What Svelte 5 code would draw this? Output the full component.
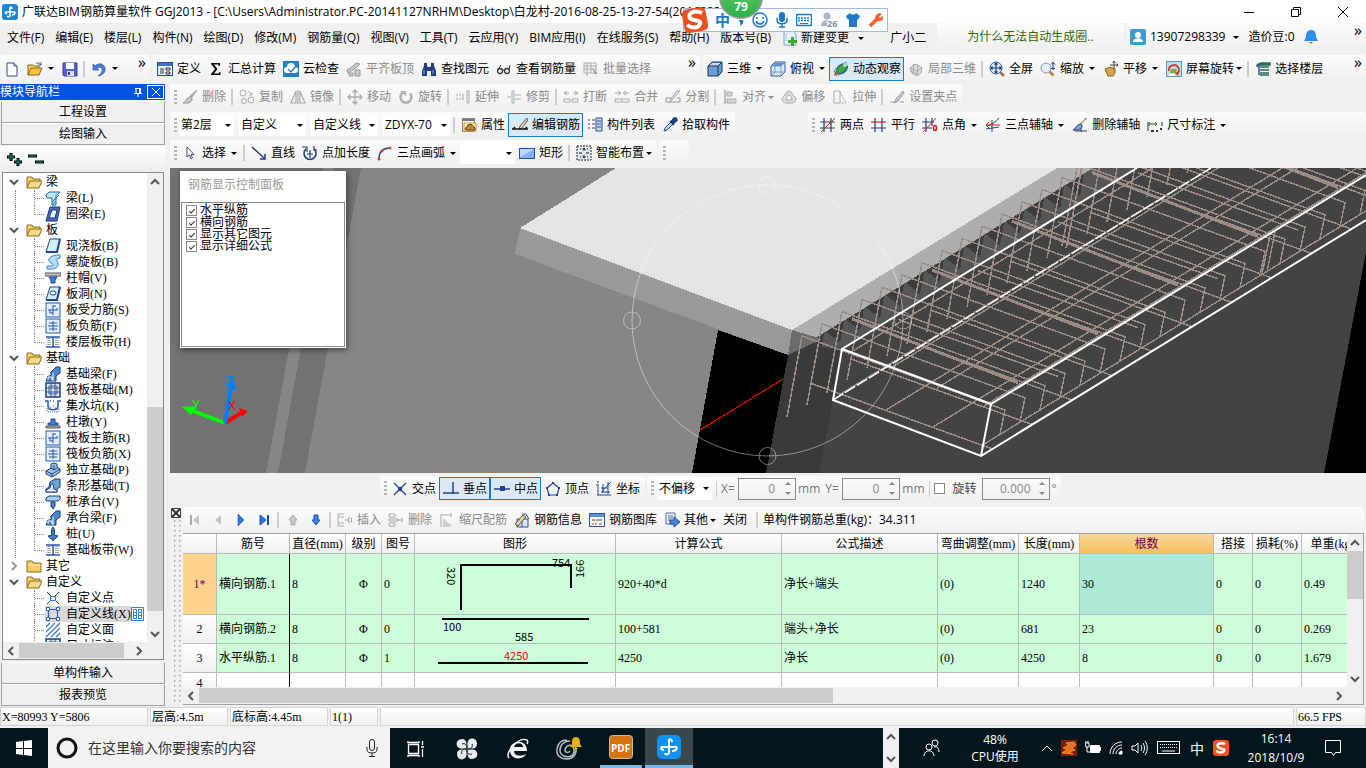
<script lang="ts">
	type Tool = {
		icon?: string;
		label?: string;
		off?: boolean;
		on?: boolean;
		drop?: 'tight' | 'wide';
		sep?: boolean;
	};

	const sep: Tool = { sep: true };

	const icons: Record<string, string> = {
		app: '<rect width="16" height="16" rx="3" fill="#1d86d8"/><path d="M8 3v9a2 2 0 0 1-3 0M3 8h10M13 8a3 3 0 0 1-3 3M3 8a3 3 0 0 0 2 2M8 3a2 2 0 0 1 2 2" fill="none" stroke="#fff" stroke-width="1.5"/>',
		file: '<path d="M3 2h7l3 3v10H3z" fill="#fff" stroke="#31507e"/><path d="M10 2v3h3" fill="#c9d8ef" stroke="#31507e"/>',
		open: '<path d="M1 14V4h5l1 1h5v3" fill="#f6d56b" stroke="#8a6414"/><path d="M1 14l3-7h11l-3 7z" fill="#f9c23c" stroke="#8a6414"/><path d="M9 3c2-2 4-1 5 1M14 1v3h-3" fill="none" stroke="#4d5a68"/>',
		save: '<path d="M1 2h14v13H2l-1-1z" fill="#5560c8" stroke="#3b3f96"/><path d="M4 2h8v6H4z" fill="#fff"/><path d="M5 10h7v5H5z" fill="#d8dcec"/><path d="M6 11h2v3H6z" fill="#343a8a"/>',
		undo: '<path d="M2 3v6h6L6 7c3-2 6 0 5 3-.3 2-2 3-4 5 5-1 8-4 7-8C13 3 8 1 4 5z" fill="#4b7dd8" stroke="#2553a8" stroke-width=".7"/>',
		define: '<rect x=".5" y="1.5" width="15" height="13" fill="#eef3fb" stroke="#1e4e9c"/><path d="M1 2h14v3H1z" fill="#3a74c8"/><path d="M3 8h4M3 10h4M3 12h4" stroke="#333"/><path d="M9 7h4v2H9zM9 11h4v2H9z" fill="none" stroke="#333"/>',
		sum: '<path d="M3 2h9v3h-1l-1-1.500H6L9.500 8 6 12.500h4.500l1-1.500h1V14H3v-1l4-5-4-5z" fill="#111"/>',
		cloud: '<rect width="16" height="16" fill="#1d83c6"/><path d="M4 12a3 3 0 0 1 0-6 4 4 0 0 1 8 0 3 3 0 0 1 0 6z" fill="#fff"/><path d="M5 8l3 3 5-6" fill="none" stroke="#1d83c6" stroke-width="1.500"/>',
		flat: '<path d="M1 9l6-4 3-3 4 1-4 4-8 5zM3 12h4v3H3zM9 9h5v6H9z" fill="#c8c8c8" stroke="#999"/>',
		find: '<path d="M3 2h3v3l1 1h2l1-1V2h3v3l2 5v5h-5v-5H6v5H1v-5l2-5z" fill="#1f3f7c"/><path d="M3 9v4M12 9v4" stroke="#8fb0e4"/>',
		glasses: '<circle cx="4" cy="10" r="2.500" fill="none" stroke="#333" stroke-width="1.300"/><circle cx="11" cy="10" r="2.500" fill="none" stroke="#333" stroke-width="1.300"/><path d="M6 9h3M2 9l3-5M13 9l1-5" stroke="#333" fill="none"/>',
		batch: '<path d="M1 2h12v10H1zM1 5h12M1 8h12M4 2v13M8 2v10" fill="none" stroke="#aaa"/><path d="M9 7l6 6-3 0 1 3z" fill="#999"/>',
		cube: '<path d="M1 5l4-4h10v10l-4 4H1z" fill="#6d9dd2" stroke="#1b3557"/><path d="M2 5l3-3h9l-3 3z" fill="#c3dbf3"/><path d="M1 5h10v10M11 5l4-4" fill="none" stroke="#1b3557"/>',
		cubeTop: '<path d="M1 5l4-4h10v10l-4 4H1z" fill="#d8e9fa" stroke="#2d5c92"/><path d="M2 5l3-3h9l-3 3z" fill="#5f97d4"/><path d="M1 5h10v10M11 5l4-4M5 1v10H1M5 11h10M1 15l4-4" fill="none" stroke="#5f8dc0" stroke-width=".8"/>',
		orbit: '<path d="M1 15l1-5 3 3z" fill="#cf3d22"/><ellipse cx="9" cy="8" rx="6" ry="4" fill="#3ca552" stroke="#1b6430" transform="rotate(-35 9 8)"/><path d="M1 11c1-4 8-10 13-9M3 14c4 1 10-4 11-9" fill="none" stroke="#2a5aa0" stroke-width=".8"/><circle cx="12" cy="4" r="2" fill="#a9e0b2"/>',
		part: '<path d="M2 7l4-4 4 1 4 3-1 5-4 3-5-3z" fill="#ddd" stroke="#aaa"/><path d="M6 3l-1 9M10 4l-1 11M2 7l7 3 5-3M2 10l7 3" stroke="#aaa" fill="none"/>',
		full: '<circle cx="7" cy="7" r="6" fill="#d9e8fb" stroke="#345a8c"/><path d="M7 2v10M2 7h10M5.500 3.500L7 2l1.500 1.500M5.500 10.500L7 12l1.500-1.500M3.500 5.500L2 7l1.500 1.500M10.500 5.500L12 7l-1.500 1.500" stroke="#1d3d82" stroke-width="1.200" fill="none"/><path d="M11 11l4 4" stroke="#a8703c" stroke-width="2.500"/>',
		zoom: '<circle cx="6" cy="7" r="5" fill="#e4effb" stroke="#8292a8"/><path d="M9.500 10.500l4 4" stroke="#c08032" stroke-width="2.500"/><path d="M13 2v7M11 3.500L13 1l2 2.500M11 7.500h4" stroke="#24436e" fill="none"/>',
		pan: '<path d="M2 8l5-2 5 2v4l-2 3H5z" fill="#d9a54c" stroke="#8c6120"/><path d="M11 0v8M7 4h8M9.500 1.500L11 0l1.500 1.500M13.500 2.500L15 4l-1.500 1.500" stroke="#444" fill="none"/>',
		rotate3: '<rect x=".5" y=".5" width="15" height="15" fill="#bfe0f2" stroke="#4f9ac0"/><path d="M5 8h6l-1 4H4z" fill="#7cb14a"/><path d="M3 10a5 5 0 1 1 8 3" fill="none" stroke="#d63c2c" stroke-width="1.800"/><path d="M13 10l-1 5-3-3z" fill="#d63c2c"/><path d="M3 13h5v2H3z" fill="#fff"/>',
		floors: '<path d="M2 4l4-2h9v2zM5 6h9M5 9h9M5 12h9M5 14h9" fill="#3d8b45" stroke="#28665a" stroke-width="1.500"/><path d="M1 5l3 0v9" stroke="#2a5c96" fill="none" stroke-width="1.500"/>',
		brush: '<path d="M15 1l-5 7-2-1z" fill="#bbb" stroke="#999"/><path d="M8 8c3 0 3 4-1 6H1c3-1 3-6 7-6z" fill="#c4c4c4" stroke="#9c9c9c"/>',
		copy: '<circle cx="4" cy="4" r="3" fill="none" stroke="#aaa"/><circle cx="5" cy="12" r="2.500" fill="none" stroke="#aaa"/><circle cx="12" cy="11" r="3" fill="none" stroke="#aaa"/><path d="M9 2l4 4M13 3v3h-3" stroke="#aaa" fill="none"/>',
		mirror: '<path d="M6 2v12H1zM10 2v12h5z" fill="none" stroke="#aaa" stroke-width="1.200"/><path d="M8 1v14" stroke="#999"/>',
		move: '<path d="M8 1v14M1 8h14M5.500 3.500L8 1l2.500 2.500M5.500 12.500L8 15l2.500-2.500M3.500 5.500L1 8l2.500 2.500M12.500 5.500L15 8l-2.500 2.500" fill="none" stroke="#aaa" stroke-width="1.300"/>',
		rotate: '<path d="M5 3.500a5.500 5.500 0 1 0 7 1" fill="none" stroke="#b0b0b0" stroke-width="2.500"/><path d="M2 2h6v5z" fill="#b0b0b0"/>',
		extend: '<path d="M1 6h7M1 10h7" stroke="#aaa" stroke-dasharray="2 1"/><path d="M8 5v6M12 2h2v12h-2z" fill="none" stroke="#aaa"/>',
		trim: '<path d="M6 2h2v12H6zM1 8h4M9 6h6M9 10h6" fill="none" stroke="#aaa"/>',
		breakIt: '<path d="M1 4h5M10 4h5M4 2L1 4l3 2M12 2l3 2-3 2M1 10h6v3H1zM9 10h6v3H9z" fill="none" stroke="#aaa"/>',
		merge: '<path d="M1 4h5M10 4h5M4 2l3 2-3 2M12 2L9 4l3 2M1 10h14v3H1zM8 10v3" fill="none" stroke="#aaa"/>',
		split: '<path d="M1 13h14M1 9h5M1 9v4M12 9h3v4M4 14L15 2l-3 0-7 9" fill="none" stroke="#999"/>',
		align: '<path d="M3 1v14" stroke="#aaa" stroke-width="1.500"/><path d="M5 3h5v4H5zM5 10h9v4H5z" fill="#d4d4d4" stroke="#aaa"/>',
		offset: '<path d="M8 2c3 0 3 3 4 4s3 2 3 4-2 4-4 4H5c-2 0-4-2-4-4s2-3 3-4 1-4 4-4z" fill="#ddd" stroke="#aaa"/><path d="M8 6c2 0 3 5 3 5H5s1-5 3-5z" fill="#fff" stroke="#aaa"/>',
		stretch: '<path d="M2 2h6v12H2z" fill="none" stroke="#aaa"/><path d="M8 3l6 11H8" fill="none" stroke="#aaa" stroke-dasharray="2 1"/>',
		grip: '<path d="M1 13h4M11 13h4" stroke="#999"/><path d="M14 2L7 10l-2 4 4-2 6-8z" fill="#ccc" stroke="#999"/>',
		props: '<rect x="1.500" y="1.500" width="12" height="13" fill="#fff" stroke="#888"/><path d="M1 2h13v2H1z" fill="#7a7a7a"/><path d="M3 6h12v8H3z" fill="#fff1c2" stroke="#e2901c"/><path d="M4 12l3-4 3-1 4 4v2H6z" fill="#b98b3c" stroke="#5a4415"/>',
		editBar: '<path d="M15 1l-7 8-1 3 3-1 6-8z" fill="#e8d5a8" stroke="#444" stroke-width=".8"/><path d="M0 12h16M1 12l2-2M13 12l2-2" stroke="#111" stroke-width="1.500"/>',
		list: '<path d="M1 3h2M1 7h2M1 11h2M5 3h3M5 7h3M5 11h3" stroke="#345"/><path d="M9 1h6v13H9z" fill="#c9daf2" stroke="#2d508c"/><path d="M10 4h4M10 7h4M10 10h4" stroke="#2d508c"/>',
		picker: '<path d="M2 14l1-3 6-6 2 2-6 6z" fill="#bcdcf4" stroke="#27456f"/><path d="M8 4l4 4M9 5l3-4h2l1 2-4 4z" fill="#1c4c98" stroke="#17386f" stroke-width="1.500"/>',
		twoPt: '<path d="M4 1v14M11 1v14M0 5h15M0 11h15" stroke="#2a3e74" stroke-width="1.200"/><path d="M1 15L15 1" stroke="#c22"/><circle cx="4" cy="11" r="1.500" fill="#2b8a2b"/><circle cx="11" cy="5" r="1.500" fill="#2b8a2b"/>',
		parallel: '<path d="M4 1v14M11 1v14M0 11h15" stroke="#2a3e74" stroke-width="1.200"/><path d="M0 5h15" stroke="#c22" stroke-width="1.200"/>',
		angle: '<path d="M4 1v14M0 5h12M0 11h10M10 1v8" stroke="#2a3e74" stroke-width="1.200"/><path d="M1 15L14 1" stroke="#c22"/><ellipse cx="13" cy="11" rx="1.500" ry="2.500" fill="none" stroke="#c22" stroke-width="1.500"/>',
		threeAxis: '<path d="M2 9c4-1 9-4 12-8M7 3v12M1 12l13-2" stroke="#2a3e74" fill="none"/><path d="M1 8h14M4 5L1 8l3 3" stroke="#c22" fill="none"/>',
		delAxis: '<path d="M14 1L8 8M3 14h12M9 9v6" stroke="#2a3e74"/><path d="M8 7c3 0 3 4-1 6H1c3-1 3-5 7-6z" fill="#7aa2d4" stroke="#2a3e74"/><path d="M15 1l-5 6-2-1z" fill="#e0b060"/>',
		dim: '<path d="M1 5v9M15 5v4M1 7h9" stroke="#333"/><path d="M3 5L1 7l2 2M8 5l2 2-2 2" fill="none" stroke="#2b8a2b"/><path d="M4 14h3M9 14h2M13 12h2" stroke="#333" stroke-width="2"/>',
		pointer: '<path d="M5 2v10l2.500-2L9 14l1.500-1L9 9.500h3z" fill="#fff" stroke="#3c4f78"/>',
		line: '<path d="M1 2l12 11" stroke="#1f3b78" stroke-width="1.500"/><path d="M14 9v5H9" fill="none" stroke="#1f3b78" stroke-width="1.500"/>',
		ptLen: '<path d="M4 4a6 6 0 1 0 8 0" fill="none" stroke="#1f3b78" stroke-width="1.500"/><path d="M0 2h5v5M8 5v8M5 9h6M12 1v4h3" fill="none" stroke="#1f3b78" stroke-width="1.200"/>',
		arc: '<path d="M2 14C2 7 6 3 13 3" fill="none" stroke="#24508f" stroke-width="1.500"/><circle cx="2" cy="14" r="1.600" fill="#d14c32"/><circle cx="5" cy="6" r="1.600" fill="#d14c32"/><circle cx="13" cy="3" r="1.600" fill="#d14c32"/>',
		rect: '<rect x=".5" y="3.500" width="15" height="10" fill="#8ab1f2" stroke="#1f4ea8"/><path d="M1 4h14L1 12z" fill="#c3d8fb"/>',
		smart: '<rect x="1" y="1" width="14" height="14" fill="#dfe9f6" stroke="#222" stroke-dasharray="2 1"/><path d="M8 3v3M8 10v3M3 8h3M10 8h3M4 4h1M11 4h1M4 12h1M11 12h1M6.500 4.500L8 3l1.500 1.500M6.500 11.500L8 13l1.500-1.500" fill="none" stroke="#111"/>',
		cross: '<path d="M2 2l12 12M14 2L2 14" stroke="#1f4590" stroke-width="1.300"/><circle cx="8" cy="8" r="2.200" fill="#1f4590"/>',
		perp: '<path d="M10 1v12M0 12h16" stroke="#1f4590" stroke-width="1.500"/>',
		mid: '<path d="M0 8h16" stroke="#1f4590" stroke-width="1.500"/><path d="M6 5h5v5H6z" fill="#1f4590"/>',
		vertex: '<path d="M8 2l6 5-2 7H4L2 7z" fill="none" stroke="#1f4590" stroke-width="1.200"/><path d="M7 1h2v2H7zM1 6h2v2H1zM13 6h2v2h-2zM3 13h2v2H3zM11 13h2v2h-2z" fill="#1f4590"/>',
		coord: '<path d="M2 5v9h13M5 7h7M5 11h9M7 3v9M12 1v12M15 1L6 10" stroke="#1f4590" fill="none"/><path d="M1 1h2M0 4h3M1 14h1" stroke="#333"/>',
		first: '<path d="M4 3v10" stroke="#aaa" stroke-width="2"/><path d="M12 3v10L6 8z" fill="#c4c4c4"/>',
		prev: '<path d="M11 3v10L5 8z" fill="#c4c4c4"/>',
		next: '<path d="M5 2v12l6-6z" fill="#2f74ea" stroke="#134fb8" stroke-width=".6"/>',
		last: '<path d="M4 3v10l6-5z" fill="#2f74ea" stroke="#134fb8"/><path d="M12 3v10" stroke="#134fb8" stroke-width="2"/>',
		up: '<path d="M8 3l4 5H10v5H6V8H4z" fill="#c8c8c8" stroke="#aaa"/>',
		down: '<path d="M8 13l4-5H10V3H6v5H4z" fill="#3f80ee" stroke="#134fb8"/>',
		insert: '<path d="M1 2h6M1 2v12h6M1 5h6M1 11h6M8 8h3M14.500 6v4h-3V6z" fill="none" stroke="#aaa"/>',
		remove: '<path d="M1 2h6v3H1zM1 11h6v3H1zM1 7h9v2H1zM10 8h5M13 6l2 2-2 2" fill="none" stroke="#aaa"/>',
		scale: '<path d="M2 2v13M2 3h11M11 1l2 2-2 2M5 7v8M7 9v6M9 11v4M11 12v3" fill="none" stroke="#aaa"/>',
		info: '<path d="M3 7h11v8H3z" fill="#dce8f8" stroke="#2d508c"/><path d="M1 12l8-9 3 2-8 9z" fill="#e6cfa0" stroke="#333" stroke-width=".8"/><path d="M8 2h4l3 5" fill="none" stroke="#2d508c"/><path d="M8 9v6" stroke="#2d508c"/>',
		gallery: '<rect x=".5" y="1.500" width="15" height="13" fill="#f3f6fc" stroke="#2b579c"/><path d="M1 2h14v3H1z" fill="#5c8fd6"/><path d="M3 8h3M7 8h6" stroke="#444"/><path d="M3 12h2M6 12h2M10 12h3" stroke="#d33"/>',
		other: '<path d="M2 1h9v11H2z" fill="#eef3fb" stroke="#54709c"/><path d="M4 4h5M4 6h5M4 8h3" stroke="#54709c"/><path d="M6 8h4V5l6 5-6 5v-3H6z" fill="#4a86d8" stroke="#1d4c94"/>',
		doc: '<path d="M2 1h9l3 3v11H2z" fill="#e8f1fa" stroke="#7da7cc"/><path d="M9 7h3v3h3v3h-3v3H9v-3H6v-3h3z" fill="#3fa535"/><path d="M4 4v8" stroke="#68a0d0" stroke-dasharray="1 1"/>',
		user: '<rect width="16" height="16" rx="2" fill="#3c9bd0"/><circle cx="8" cy="6" r="3" fill="#fff"/><path d="M3 13c0-5 10-5 10 0z" fill="#fff"/>',
		bell: '<path d="M8 1c4 0 5 3 5 7l2 4H1l2-4c0-4 1-7 5-7z" fill="#2e8df0"/><path d="M6 13h4l-2 2z" fill="#2e8df0"/>',
		folder: '<path d="M1 14V3h5l1 2h7v2" fill="#f3ce70" stroke="#8d6a20"/><path d="M1 14l3-7h12l-3 7z" fill="#fbdb85" stroke="#8d6a20"/>',
		folderShut: '<path d="M1 14V3h5l1 2h8v9z" fill="#f5cd62" stroke="#8d6a20"/><path d="M2 7h12" stroke="#fdeeb8"/>',
		tBeam: '<path d="M1 5l3-3h11l-3 3h-1v10H7V8L2 8z" fill="#bfe3f8" stroke="#1a6aa8"/><path d="M7 12l7-7M7 15l4-4" stroke="#1a6aa8"/>',
		tRing: '<path d="M5 1h10l-3 14H1z" fill="#4e6cb8" stroke="#15307a"/><path d="M7 4h5l-2 8H4z" fill="#fff" stroke="#15307a"/>',
		tSlab: '<path d="M5 1h10l-3 13H1z" fill="#d8ecfa" stroke="#1b4698"/><path d="M1 14h11l3-13" fill="none" stroke="#1b4698" stroke-width="2"/>',
		tSpiral: '<path d="M15 1C6 1 3 4 4 7s6 2 3 5H2v3c8 1 12-2 11-6S8 6 15 4z" fill="#b8ddf8" stroke="#2f83c8"/>',
		tCap: '<path d="M0 3h16v3H0z" fill="#c8c8c8" stroke="#555"/><path d="M4 7h8l-2 3v3H6v-3z" fill="#3f7fd8" stroke="#15489a"/>',
		tHole: '<path d="M5 1h10l-3 13H1z" fill="#d8ecfa" stroke="#1b4698"/><ellipse cx="8" cy="7" rx="3" ry="2" fill="#fff" stroke="#1b4698"/><path d="M1 14h11l3-13" stroke="#1b4698" stroke-width="2" fill="none"/>',
		tForce: '<rect x="1" y="1" width="14" height="14" fill="#e4eefb" stroke="#2458b0"/><path d="M8 3v10M3 8h10M8 4h3M12 6v2M5 8v3h3" fill="none" stroke="#2458b0"/>',
		tNeg: '<rect x="1" y="1" width="14" height="14" fill="#e4eefb" stroke="#2458b0"/><path d="M8 3v10M4 5h8M3 8h10M4 11h8" fill="none" stroke="#2458b0"/>',
		tBand: '<path d="M1 3h14M1 13h14M8 3v10" stroke="#2458b0" stroke-width="1.500"/><path d="M3 4v8M13 4v8M5 4v8M11 4v8" stroke="#555" stroke-dasharray="1 1"/>',
		tFound: '<path d="M1 15l2-5h3V6l5-5h4v6l-4 3v5z" fill="#4a86c8" stroke="#143f7c"/><path d="M3 14v-3h4v3M8 7v8" stroke="#fff" fill="none"/>',
		tRaft: '<rect x="1" y="1" width="14" height="14" fill="#e4eefb" stroke="#143f7c" stroke-width="1.500"/><path d="M4 4h8v8H4zM6 1v14M10 1v14M1 6h14M1 10h14" fill="none" stroke="#143f7c" stroke-width=".8"/>',
		tPit: '<path d="M0 3h3v5c0 5 10 5 10 0V3h3M5 3h1M8 3h1" fill="none" stroke="#2458b0" stroke-width="1.500"/><path d="M2 10l1 4h10l1-4M5 9h1M8 8h1M10 10h1" stroke="#2458b0" fill="none" stroke-dasharray="1 1"/>',
		tPier: '<path d="M6 5h4v4h3v2H3V9h3z" fill="#3f7fd8" stroke="#15489a"/><path d="M1 12h14v2H1z" fill="#bbb" stroke="#555"/>',
		tIso: '<path d="M1 9l5-3V2l3-1 3 1v3l3 2v3l-8 5-6-3z" fill="#9cc4ea" stroke="#143f7c"/><path d="M1 9l6 3 8-5M7 12v3M6 6l3 2 3-2M9 3v5" fill="none" stroke="#143f7c"/>',
		tStrip: '<path d="M1 14v-3l3-2 1-5 5-3h5v8l-3 2v3z" fill="#6fa0d4" stroke="#143f7c"/><path d="M1 14v-2l4-2 1-4h2l1 5 3 1v2z" fill="#e9f3fc" stroke="#143f7c"/>',
		tPile: '<path d="M1 4l3-2h11v3l-2 2H1z" fill="#a9cdee" stroke="#143f7c"/><path d="M6 8h4v4l-2 3-2-3z" fill="#4a86c8" stroke="#143f7c"/>',
		tPin: '<path d="M8 1c2 3 2 5 1 8l4 1-3 3H9l-1 2-1-2H6l-3-3 4-1C6 6 6 4 8 1z" fill="#3f7fc8" stroke="#143f7c"/>',
		tPoint: '<path d="M2 2l5 5M9 9l5 5M14 2L9 7M7 9l-5 5" stroke="#333"/><rect x="5.500" y="6.500" width="5" height="4" fill="#fff" stroke="#2d7fd8"/>',
		tLine: '<path d="M3.500 3.500h9v9h-9z" fill="none" stroke="#2d5fb8" stroke-width="1.200"/><path d="M1.500 1.500h3v3h-3zM11.500 1.500h3v3h-3zM1.500 11.500h3v3h-3zM11.500 11.500h3v3h-3z" fill="#fff" stroke="#2d5fb8"/>',
		tArea: '<path d="M1 5l4-4M1 10l9-9M1 15L15 1M6 15l9-9M11 15l4-4" stroke="#3b78c8" stroke-width="1.300"/>',
	};

	const menus = ['文件(F)', '编辑(E)', '楼层(L)', '构件(N)', '绘图(D)', '修改(M)', '钢筋量(Q)', '视图(V)', '工具(T)', '云应用(Y)', 'BIM应用(I)', '在线服务(S)', '帮助(H)', '版本号(B)'];

	const mainTools: Tool[] = [
		{ icon: 'define', label: '定义' },
		{ icon: 'sum', label: '汇总计算' },
		{ icon: 'cloud', label: '云检查' },
		{ icon: 'flat', label: '平齐板顶', off: true },
		{ icon: 'find', label: '查找图元' },
		{ icon: 'glasses', label: '查看钢筋量' },
		{ icon: 'batch', label: '批量选择', off: true },
	];

	const viewTools: Tool[] = [
		{ icon: 'cube', label: '三维', drop: 'wide' },
		{ icon: 'cubeTop', label: '俯视', drop: 'wide' },
		{ icon: 'orbit', label: '动态观察', on: true },
		{ icon: 'part', label: '局部三维', off: true },
		sep,
		{ icon: 'full', label: '全屏' },
		{ icon: 'zoom', label: '缩放', drop: 'wide' },
		{ icon: 'pan', label: '平移', drop: 'wide' },
		{ icon: 'rotate3', label: '屏幕旋转', drop: 'tight' },
		sep,
		{ icon: 'floors', label: '选择楼层' },
	];

	const modifyTools: Tool[] = [
		{ icon: 'brush', label: '删除', off: true },
		sep,
		{ icon: 'copy', label: '复制', off: true },
		{ icon: 'mirror', label: '镜像', off: true },
		sep,
		{ icon: 'move', label: '移动', off: true },
		{ icon: 'rotate', label: '旋转', off: true },
		sep,
		{ icon: 'extend', label: '延伸', off: true },
		{ icon: 'trim', label: '修剪', off: true },
		sep,
		{ icon: 'breakIt', label: '打断', off: true },
		{ icon: 'merge', label: '合并', off: true },
		{ icon: 'split', label: '分割', off: true },
		sep,
		{ icon: 'align', label: '对齐', off: true, drop: 'tight' },
		{ icon: 'offset', label: '偏移', off: true },
		{ icon: 'stretch', label: '拉伸', off: true },
		sep,
		{ icon: 'grip', label: '设置夹点', off: true },
	];

	const memberTools: Tool[] = [
		sep,
		{ icon: 'props', label: '属性' },
		{ icon: 'editBar', label: '编辑钢筋', on: true },
		{ icon: 'list', label: '构件列表' },
		{ icon: 'picker', label: '拾取构件' },
	];

	const axisTools: Tool[] = [
		{ icon: 'twoPt', label: '两点' },
		{ icon: 'parallel', label: '平行' },
		{ icon: 'angle', label: '点角', drop: 'wide' },
		{ icon: 'threeAxis', label: '三点辅轴', drop: 'wide' },
		{ icon: 'delAxis', label: '删除辅轴' },
		{ icon: 'dim', label: '尺寸标注', drop: 'wide' },
	];

	const drawTools: Tool[] = [
		{ icon: 'pointer', label: '选择', drop: 'wide' },
		sep,
		{ icon: 'line', label: '直线' },
		{ icon: 'ptLen', label: '点加长度' },
		{ icon: 'arc', label: '三点画弧', drop: 'wide' },
	];

	const shapeTools: Tool[] = [
		{ icon: 'rect', label: '矩形' },
		sep,
		{ icon: 'smart', label: '智能布置', drop: 'tight' },
	];

	const snapTools: Tool[] = [
		{ icon: 'cross', label: '交点' },
		{ icon: 'perp', label: '垂点', on: true },
		{ icon: 'mid', label: '中点', on: true },
		{ icon: 'vertex', label: '顶点' },
		{ icon: 'coord', label: '坐标' },
	];

	const barTools: Tool[] = [
		{ icon: 'first', off: true },
		{ icon: 'prev', off: true },
		{ icon: 'next' },
		{ icon: 'last' },
		sep,
		{ icon: 'up', off: true },
		{ icon: 'down' },
		sep,
		{ icon: 'insert', label: '插入', off: true },
		{ icon: 'remove', label: '删除', off: true },
		{ icon: 'scale', label: '缩尺配筋', off: true },
		{ icon: 'info', label: '钢筋信息' },
		{ icon: 'gallery', label: '钢筋图库' },
		{ icon: 'other', label: '其他', drop: 'tight' },
		{ label: '关闭' },
	];

	const combos = [
		{ name: '楼层', value: '第2层', width: 55 },
		{ name: '构件类别', value: '自定义', width: 67 },
		{ name: '构件类型', value: '自定义线', width: 67 },
		{ name: '构件', value: 'ZDYX-70', width: 67 },
	];

	const tree = [
		{ label: '梁', open: true, items: [['tBeam', '梁(L)'], ['tRing', '圈梁(E)']] },
		{
			label: '板',
			open: true,
			items: [
				['tSlab', '现浇板(B)'],
				['tSpiral', '螺旋板(B)'],
				['tCap', '柱帽(V)'],
				['tHole', '板洞(N)'],
				['tForce', '板受力筋(S)'],
				['tNeg', '板负筋(F)'],
				['tBand', '楼层板带(H)'],
			],
		},
		{
			label: '基础',
			open: true,
			items: [
				['tFound', '基础梁(F)'],
				['tRaft', '筏板基础(M)'],
				['tPit', '集水坑(K)'],
				['tPier', '柱墩(Y)'],
				['tForce', '筏板主筋(R)'],
				['tNeg', '筏板负筋(X)'],
				['tIso', '独立基础(P)'],
				['tStrip', '条形基础(T)'],
				['tPile', '桩承台(V)'],
				['tFound', '承台梁(F)'],
				['tPin', '桩(U)'],
				['tBand', '基础板带(W)'],
			],
		},
		{ label: '其它', open: false, items: [] },
		{
			label: '自定义',
			open: true,
			items: [
				['tPoint', '自定义点'],
				['tLine', '自定义线(X)'],
				['tArea', '自定义面'],
				['tRaft', '尺寸标注(W)'],
			],
		},
	];
	const selected = '自定义线(X)';

	const columns: [string, number][] = [
		['', 34],
		['筋号', 73],
		['直径(mm)', 56],
		['级别', 36],
		['图号', 33],
		['图形', 201],
		['计算公式', 166],
		['公式描述', 156],
		['弯曲调整(mm)', 81],
		['长度(mm)', 61],
		['根数', 134],
		['搭接', 39],
		['损耗(%)', 49],
		['单重(kg)', 62],
	];
	const tableWidth = columns.reduce((sum, c) => sum + c[1], 0);

	const rows = [
		{ no: '1*', height: 61, cells: ['横向钢筋.1', '8', 'Φ', '0', '', '920+40*d', '净长+端头', '(0)', '1240', '30', '0', '0', '0.49'] },
		{ no: '2', height: 29, cells: ['横向钢筋.2', '8', 'Φ', '0', '', '100+581', '端头+净长', '(0)', '681', '23', '0', '0', '0.269'] },
		{ no: '3', height: 29, cells: ['水平纵筋.1', '8', 'Φ', '1', '', '4250', '净长', '(0)', '4250', '8', '0', '0', '1.679'] },
	];

	const showOptions = ['水平纵筋', '横向钢筋', '显示其它图元', '显示详细公式'];

	// Stirrups repeat along the beam axis by (20, -12.2).
	const stirrups = Array.from({ length: 32 }, (_, k) => ({ k, x: 20 * k, y: -12.2 * k }));
	const longBars = [[848, 354], [889, 369], [937, 388], [984, 406], [839, 395], [886, 410], [933, 427], [981, 446]];
</script>

{#snippet icon(name: string)}
	<svg class="icon" viewBox="0 0 16 16" width="16" height="16" aria-hidden="true">{@html icons[name]}</svg>
{/snippet}

{#snippet toolList(tools: Tool[])}
	{#each tools as t}
		{#if t.sep}
			<span class="sep"></span>
		{:else}
			<button class="tool" class:on={t.on} disabled={t.off} aria-label={t.label ?? t.icon}>
				{#if t.icon}{@render icon(t.icon)}{/if}
				{#if t.label}<span>{t.label}</span>{/if}
				{#if t.drop}<i class="caret {t.drop}"></i>{/if}
			</button>
		{/if}
	{/each}
{/snippet}

{#snippet combo(name: string, value: string, width: number)}
	<label class="combo" style="width: {width}px">
		<select aria-label={name}><option>{value}</option></select>
		<i class="caret"></i>
	</label>
{/snippet}

{#snippet chev(dir: string)}
	<svg class="chev {dir}" viewBox="0 0 10 10" width="10" height="10" aria-hidden="true"><path d="M1 3l4 4 4-4" fill="none" stroke="currentColor" stroke-width="2" /></svg>
{/snippet}

{#snippet spin(name: string, value: string, wide: boolean)}
	<span class="spin" class:wide>
		<input aria-label={name} {value} disabled />
		<span class="steps">
			<button aria-label="增加{name}" disabled><i class="caret flip"></i></button>
			<button aria-label="减少{name}" disabled><i class="caret"></i></button>
		</span>
	</span>
{/snippet}

<div class="app">
	<header class="title">
		{@render icon('app')}
		<h1>广联达BIM钢筋算量软件 GGJ2013 - [C:\Users\Administrator.PC-20141127NRHM\Desktop\白龙村-2016-08-25-13-27-54(20160834160)]</h1>
		<div class="winbtns">
			<button aria-label="最小化"><svg width="10" height="10"><path d="M0 5.500h10" stroke="#000" /></svg></button>
			<button aria-label="还原"><svg width="10" height="10"><path d="M.5 2.500h7v7h-7zM2.500 2.500v-2h7v7h-2" fill="none" stroke="#000" /></svg></button>
			<button aria-label="关闭"><svg width="10" height="10"><path d="M0 0l10 10M10 0L0 10" stroke="#000" /></svg></button>
		</div>
	</header>

	<nav class="menubar">
		<div class="menus">
			{#each menus as m}<button>{m}</button>{/each}
			<button class="change">{@render icon('doc')}新建变更<i class="caret wide"></i></button>
			<button class="helper">广小二</button>
		</div>
		<div class="strip tip"><a href="#tip">为什么无法自动生成圈..</a></div>
		<div class="strip account">
			{@render icon('user')}
			<button>13907298339<i class="caret wide"></i></button>
			<span>造价豆:0</span>
			{@render icon('bell')}
			<button class="more" aria-label="更多">»</button>
		</div>
	</nav>

	<div class="toprow">
		<div class="strip quick">
			<button class="tool" aria-label="新建">{@render icon('file')}</button>
			<button class="tool" aria-label="打开">{@render icon('open')}<i class="caret wide"></i></button>
			<button class="tool" aria-label="保存">{@render icon('save')}</button>
			<span class="sep"></span>
			<button class="tool" aria-label="撤销">{@render icon('undo')}<i class="caret wide"></i></button>
			<button class="more" aria-label="更多">»</button>
		</div>
		<div class="strip main">
			{@render toolList(mainTools)}
			<button class="more" aria-label="更多">»</button>
		</div>
		<div class="strip view">
			{@render toolList(viewTools)}
			<button class="more" aria-label="更多">»</button>
		</div>
	</div>

	<div class="body">
		<aside class="dock song">
			<div class="docktitle">
				<span>模块导航栏</span>
				<svg width="10" height="10"><path d="M2 1.500h6M3 1v5M6.500 1v5M7.500 1v5M1 6.500h8M5 6v4" stroke="#fff" fill="none" /></svg>
				<button aria-label="关闭导航栏"><svg width="8" height="8"><path d="M0 0l8 8M8 0L0 8" stroke="#fff" /></svg></button>
			</div>
			<button class="tab">工程设置</button>
			<button class="tab">绘图输入</button>
			<div class="expanders">
				<button aria-label="全部展开"><svg width="18" height="14"><path d="M1 5h8M5 1v8M8 10h8M12 6v8" stroke="#000" stroke-width="3" /><path d="M2 5h6M5 2v6M9 10h6M12 7v6" stroke="#1a9a8a" /></svg></button>
				<button aria-label="全部折叠"><svg width="18" height="14"><path d="M0 4h9M7 10h9" stroke="#000" stroke-width="3" /><path d="M1 4h7M8 10h7" stroke="#1a9a8a" /></svg></button>
			</div>
			<div class="tree">
				<div class="treetop">
					<ul>
						{#each tree as group, g}
							<li class="node">
								<span class="twist" class:shut={!group.open}>{@render chev(group.open ? 'down' : 'right')}</span>
								{@render icon(group.open ? 'folder' : 'folderShut')}
								<span>{group.label}</span>
							</li>
							{#each group.items as [ico, label], i}
								<li class="leaf">
									<span class="rail" class:none={g === tree.length - 1}></span>
									<span class="branch" class:end={i === group.items.length - 1}></span>
									<span class="pick" class:selected={label === selected}>
										{@render icon(ico)}
										<span>{label}</span>
									</span>
									{#if label === selected}
										<svg width="13" height="14"><path d="M.5.5h12v13H.5z" fill="#fff" stroke="#2d7fd8" /><path d="M2.500 2.500h3v9h-3zM7.500 2.500h3v9h-3zM3 5.500h2M3 8.500h2M8 5.500h2M8 8.500h2" fill="none" stroke="#2d7fd8" /></svg>
									{/if}
								</li>
							{/each}
						{/each}
					</ul>
					<div class="vbar">
						<button aria-label="上滚">{@render chev('up')}</button>
						<div class="vtrack"><div class="thumb treethumb"></div></div>
						<button aria-label="下滚">{@render chev('down')}</button>
					</div>
				</div>
				<div class="hbar treeh">
					<button aria-label="左滚">{@render chev('left')}</button>
					<div class="htrack"><div class="thumb"></div></div>
					<button aria-label="右滚">{@render chev('right')}</button>
				</div>
			</div>
			<button class="tab">单构件输入</button>
			<button class="tab">报表预览</button>
		</aside>

		<main>
			<div class="row">
				<div class="strip grips">{@render toolList(modifyTools)}</div>
			</div>
			<div class="row spread">
				<div class="strip grips">
					<div class="combos">
						{#each combos as c}{@render combo(c.name, c.value, c.width)}{/each}
					</div>
					{@render toolList(memberTools)}
				</div>
				<div class="strip grips axis">{@render toolList(axisTools)}</div>
			</div>
			<div class="row">
				<div class="strip grips">
					{@render toolList(drawTools)}
					{@render combo('弧参数', '', 55)}
					{@render toolList(shapeTools)}
				</div>
				<div class="strip grips stub"></div>
			</div>

			<section class="scene">
				<svg viewBox="170 168 1196 305" preserveAspectRatio="xMinYMin slice" aria-label="三维视图">
					<g shape-rendering="crispEdges">
						<path d="M170 168h1196v305H170z" fill="#868686" />
						<path d="M170 168h191l-56 305H170z" fill="#727272" />
						<path d="M323 168h11l-56 305h-12z" fill="#868686" />
						<path d="M788 355L1093 168h273v305H766z" fill="#434343" />
						<path d="M788 355l54-33v27l-9 51-14 73h-53z" fill="#3a3a3a" />
						<path d="M804 345L1093 168h44L842 349z" fill="#565656" />
						{#each stirrups.slice(0, 14) as s}
							<path d="M{806 + s.x} {344 + s.y}l18 -11 -4 22z" fill="#3c3c3c" />
						{/each}
						<path d="M1366 251v222h-42z" fill="#000" />
						<path d="M718 330l70 25-22 118h-74z" fill="#000" />
						<path d="M616 168L520 228l272 102 265-162z" fill="#e5e5e5" />
						<path d="M520 228l272 102-4 25-273-101z" fill="#999" />
						<path d="M792 330l265-162h36L804 345l-12-4z" fill="#aeaeae" />
						<path d="M792 330l30 9-34 16z" fill="#6c6c6c" />
						<path d="M700 430l83-51" stroke="#f00" />
					</g>
					<g fill="none" stroke="#9b8c86" stroke-width="1.500" shape-rendering="crispEdges">
						{#each stirrups as s}
							<path d="M{787 + s.x} {417 + s.y}l15 -81" />
							<path d="M{802 + s.x} {336 + s.y}l203 74 -5 24" />
							{#if s.k % 2 === 0}
								<path d="M{810 + s.x} {383 + s.y}l188 68" />
							{/if}
							{#if s.k % 4 === 1}
								<path d="M{832 + s.x} {331 + s.y}l166 64" stroke-width="3" />
							{/if}
							{#if s.k % 4 === 3}
								<path d="M{838 + s.x} {356 + s.y}l160 57" />
							{/if}
						{/each}
						{#each longBars as p}<path d="M{p[0]} {p[1]}l560 -342" />{/each}
						<path d="M1082 168l-16 80M1077 168l-15 78M1270 236l-8 38M1275 232l-8 40" />
					</g>
					<path d="M981 456L1366 220v31l-42 222H960z" fill="#434343" />
					<g fill="none" stroke="#fff" stroke-width="2">
						<path d="M842 349l149 55-10 52-148-56zM842 349l295-181M991 404l375-229M981 456l385-236" />
						<path d="M833 400l378-232" stroke-width="1.500" stroke-dasharray="12 2" />
					</g>
					<g fill="none" stroke="#fff" opacity=".45">
						<circle cx="767.500" cy="320.500" r="135.500" />
						<circle cx="767.500" cy="185" r="8.500" />
						<circle cx="767.500" cy="456" r="8.500" />
						<circle cx="632" cy="320.500" r="8.500" />
						<circle cx="903" cy="320.500" r="8.500" />
					</g>
					<g class="axes">
						<path d="M225 423L193 411" stroke="#0f0" stroke-width="4" />
						<path d="M182 407l15-1-6 9z" fill="#0f0" />
						<path d="M225 423l16-10" stroke="#f00" stroke-width="4" />
						<path d="M239 408l9 3-6 6" fill="#f00" />
						<path d="M225 423l6-37" stroke="#0080ff" stroke-width="4" />
						<path d="M233 376l3 14h-9z" fill="#0080ff" />
						<text x="225" y="385" fill="#0080ff">Z</text>
						<text x="192" y="409" fill="#0f0">Y</text>
						<text x="228" y="410" fill="#f00">X</text>
					</g>
				</svg>
				<div class="float">
					<h2>钢筋显示控制面板</h2>
					<div class="checks song">
						{#each showOptions as o}
							<label><input type="checkbox" checked />{o}</label>
						{/each}
					</div>
				</div>
			</section>

			<div class="snaprow">
				<div class="strip grips">{@render toolList(snapTools)}</div>
				<div class="strip grips offset">
					{@render combo('偏移方式', '不偏移', 55)}
					<span class="sep"></span>
					<span class="dim">X=</span>
					{@render spin('X', '0', false)}
					<span class="dim">mm</span>
					<span class="dim">Y=</span>
					{@render spin('Y', '0', false)}
					<span class="dim">mm</span>
					<span class="sep"></span>
					<label class="turn"><input type="checkbox" disabled />旋转</label>
					{@render spin('角度', '0.000', true)}
					<span class="dim">°</span>
				</div>
			</div>

			<section class="panel">
				<div class="handle">
					<button aria-label="关闭面板"><svg width="10" height="10"><path d="M.5.5h9v9h-9z" fill="#fff" stroke="#444" /><path d="M1 1l8 8M9 1L1 9" stroke="#333" stroke-width="2" /></svg></button>
				</div>
				<div class="panelbody">
					<div class="strip bars">
						{@render toolList(barTools)}
						<span class="total">单构件钢筋总重(kg)：34.311</span>
					</div>
					<div class="gridbox song">
						<div class="gridview">
							<div class="gridclip">
								<table style="width: {tableWidth}px">
									<colgroup>{#each columns as c}<col style="width: {c[1]}px" />{/each}</colgroup>
									<thead>
										<tr>{#each columns as c}<th class:hot={c[0] === '根数'}>{c[0]}</th>{/each}</tr>
									</thead>
									<tbody>
										{#each rows as r, ri}
											<tr style="height: {r.height}px">
												<th class:current={ri === 0}>{r.no}</th>
												{#each r.cells as cell, ci}
													<td class:name={ci === 0} class:mid={ci === 2} class:active={ri === 0 && ci === 9}>
														{#if ci !== 4}
															{cell}
														{:else if ri === 0}
															<svg width="200" height="60"><path d="M46 56V11h110v23" fill="none" stroke="#000" stroke-width="2" /><text x="137" y="13">754</text><text transform="translate(32 13) rotate(90)">320</text><text transform="translate(169 24) rotate(-90)">166</text></svg>
														{:else if ri === 1}
															<svg width="200" height="28"><path d="M27 4h147" stroke="#000" stroke-width="2" /><text x="28" y="16">100</text><text x="100" y="26">585</text></svg>
														{:else}
															<svg width="200" height="28"><path d="M23 19h150" stroke="#000" stroke-width="2" /><text x="89" y="16" fill="#f00">4250</text></svg>
														{/if}
													</td>
												{/each}
											</tr>
										{/each}
										<tr class="blank">
											<th>4</th>
											{#each rows[0].cells as _, ci}<td class:name={ci === 0}></td>{/each}
										</tr>
									</tbody>
								</table>
							</div>
							<div class="vbar">
								<button aria-label="上滚">{@render chev('up')}</button>
								<div class="vtrack"><div class="thumb gridthumb"></div></div>
								<button aria-label="下滚">{@render chev('down')}</button>
							</div>
						</div>
						<div class="hbar gridh">
							<button aria-label="左滚">{@render chev('left')}</button>
							<div class="htrack"><div class="thumb"></div></div>
							<button aria-label="右滚">{@render chev('right')}</button>
						</div>
					</div>
				</div>
			</section>
		</main>
	</div>

	<footer class="status song">
		<span class="s1">X=80993 Y=5806</span>
		<span class="s2">层高:4.5m</span>
		<span class="s3">底标高:4.45m</span>
		<span class="s4">1(1)</span>
		<span class="s5"></span>
		<span class="s6">66.5 FPS</span>
	</footer>

	<div class="taskbar">
		<button class="start" aria-label="开始"><svg width="16" height="16"><path d="M0 2l7-1v7H0zM8 1l8-1v8H8zM0 9h7v6l-7-1zM8 9h8v7l-8-1z" fill="#fff" /></svg></button>
		<label class="search">
			<svg width="22" height="22"><circle cx="11" cy="11" r="9" fill="none" stroke="#111" stroke-width="3" /></svg>
			<input placeholder="在这里输入你要搜索的内容" aria-label="搜索" />
			<svg width="12" height="18"><rect x="3.500" y=".5" width="5" height="11" rx="2.500" fill="none" stroke="#222" /><path d="M1 8v3c0 4 10 4 10 0V8M6 14v3M3 17.500h6" fill="none" stroke="#222" /></svg>
		</label>
		<div class="pinned">
			<button aria-label="任务视图"><svg width="18" height="18"><path d="M1.500 4.500h10v9h-10zM1 1v1.500h11V1M1 17v-1.500h11V17M15.500 1v4M15.500 9v8M14 7h3" fill="none" stroke="#fff" stroke-width="1.300" /></svg></button>
			<button aria-label="四叶"><svg width="24" height="24"><path d="M11.500 11.500H6C0 11 0 2 7 2c3 0 4.500 2 4.500 5zM12.500 11.500V6c.5-6 9.500-6 9.500 1 0 3-2 4.500-5 4.500zM12.500 12.500H18c6 .5 6 9.500-1 9.500-3 0-4.500-2-4.500-5zM11.500 12.500V18c-.5 6-9.500 6-9.500-1 0-3 2-4.500 5-4.500z" fill="#e8ecee" /><path d="M12 11C12 7 9 6 7 7M13 12c4 0 5-3 4-5M12 13c0 4 3 5 5 4M11 12c-4 0-5 3-4 5" fill="none" stroke="#04161c" /></svg></button>
			<button aria-label="浏览器"><svg width="24" height="24"><path d="M21 14H8c0 5 7 6 12 3-2 6-16 7-16-4C4 3 21 1 21 14zM8 10h9c0-5-8-5-9 0z" fill="#f2f4f5" /><path d="M3 21c-5-5 10-22 18-18 1 1 1 2 0 4" fill="none" stroke="#f2f4f5" stroke-width="1.500" /></svg></button>
			<button aria-label="通知中心"><svg width="28" height="26"><path d="M15 15c-1 2-5 2-5-1s4-6 7-4 3 8-1 10-11 0-11-6 5-9 10-9M20 10c3 6-1 13-8 13S1 19 2 13 7 4 12 4" fill="none" stroke="#b8bec2" stroke-width="1.500" /><path d="M21 1c4 0 4 4 4 7l2 3H15l2-3c0-4 0-7 4-7zM19 12h4l-2 2z" fill="#e8b010" /></svg></button>
			<button class="run" aria-label="PDF"><svg width="24" height="24"><rect x=".5" y=".5" width="23" height="23" rx="3" fill="#d9730f" stroke="#c9b8a2" /><text x="2" y="17" font-size="10" font-weight="700" fill="#fff">PDF</text></svg></button>
			<button class="run cur" aria-label="广联达"><svg width="24" height="24"><rect width="24" height="24" rx="5" fill="#0e92f4" /><path d="M12 4v13c0 3-4 3-4 1M4 12h16M20 12c0 3-2 4-5 4M4 12c0 2 1 3 3 3M12 5c2-1 3 0 3 2" fill="none" stroke="#fff" stroke-width="2" /></svg></button>
		</div>
		<div class="scroller">
			<button aria-label="上">{@render chev('up')}</button>
			<button aria-label="下">{@render chev('down')}</button>
		</div>
		<div class="tray">
			<svg width="18" height="18"><circle cx="6" cy="8" r="3" /><path d="M1 17c0-7 10-7 10 0" /><circle cx="12" cy="4" r="3" /><path d="M11 8c4-1 5 2 5 5" /></svg>
			<span class="cpu">48%<br />CPU使用</span>
			<svg width="12" height="8"><path d="M1 7l5-5 5 5" /></svg>
			<svg width="16" height="16"><rect width="16" height="16" fill="#7c1e0a" stroke="none" /><path d="M1 13l5-4-4-1 6-3-3-2 8-1 2 3-4 3 3 2-6 2 4 2z" fill="#e8701c" stroke="#f8b030" stroke-width=".7" /></svg>
			<svg width="16" height="14"><path d="M5.500 4.500h9v7h-9z" fill="#fff" /><path d="M15.500 6v4M0 2h4v4H1zM2 6v5h3M1 0v2M3 0v2" /></svg>
			<svg width="14" height="14"><path d="M1 13C1 6 6 1 13 1M4 13c0-5 4-9 9-9M7 13c0-3 3-6 6-6" /><path d="M10 13c0-2 1-3 3-3v3z" fill="#fff" /></svg>
			<svg width="18" height="16"><path d="M1 6h3l3-3v10l-3-3H1zM10 5c1 2 1 4 0 6M12 3c2 3 2 7 0 10M14 1c3 4 3 10 0 14" /></svg>
			<svg width="24" height="16"><rect x=".5" y="1.500" width="22" height="12" /><path d="M3 4.500h17M3 7.500h17" stroke-dasharray="1 1" /><path d="M5 11h13" /></svg>
			<span class="ime">中</span>
			<svg width="16" height="16"><rect width="16" height="16" rx="3" fill="#f4511e" stroke="none" /><path d="M12 4C8 2 3 4 5 7s8 1 6 4-6 1-8 0" stroke-width="2.500" /></svg>
			<span class="clock">16:14<br />2018/10/9</span>
			<svg width="16" height="18"><path d="M.5 1.500h15v12h-5l-2 3-2-3h-6z" /></svg>
		</div>
	</div>

	<div class="imebar">
		<svg class="sogou" width="28" height="28"><rect x="2" y="2" width="24" height="24" rx="5" fill="#f04e1e" transform="rotate(-10 14 14)" /><path d="M21 7C13 3 6 8 9 12s12 1 10 6-9 4-13 1" fill="none" stroke="#fff" stroke-width="4" /></svg>
		<span>中</span>
		<svg width="6" height="14"><path d="M1 7h4c1 3-1 5-3 6 1-2 0-3-1-6z" fill="#1e78c8" /></svg>
		<svg width="16" height="16"><circle cx="8" cy="8" r="7" fill="none" stroke="#1e78c8" stroke-width="1.500" /><path d="M5 5v2M11 5v2M4 9c1 4 7 4 8 0" fill="none" stroke="#1e78c8" stroke-width="1.500" /></svg>
		<svg width="12" height="16"><rect x="3" width="6" height="10" rx="3" fill="#1e78c8" /><path d="M1 6v2c0 5 10 5 10 0V6M6 12v3M3 15h6" fill="none" stroke="#1e78c8" stroke-width="1.500" /></svg>
		<svg width="16" height="14"><rect x=".5" y="1.500" width="15" height="11" rx="1" fill="none" stroke="#1e78c8" stroke-width="1.500" /><path d="M2 5h12M2 7.500h12" stroke="#1e78c8" stroke-width="1.500" stroke-dasharray="2 1" /><path d="M4 10.500h8" stroke="#1e78c8" /></svg>
		<svg width="18" height="16"><circle cx="7" cy="4" r="3.500" fill="#a9b6c6" /><path d="M1 14c0-8 12-8 12 0z" fill="#a9b6c6" /><text x="7" y="15" font-size="9" fill="#8494a8" stroke="#fff" stroke-width="2" paint-order="stroke">26</text></svg>
		<svg width="14" height="14"><path d="M4 0c1 2 5 2 6 0l4 3-2 4-1-1v8H3V6L2 7 0 3z" fill="#1e78c8" /></svg>
		<svg width="16" height="16"><path d="M2 14l8-8" stroke="#f4642e" stroke-width="3.500" /><path d="M14 2l-3 3 1 1 3-2c1 4-2 6-6 5L7 7c0-4 3-7 7-5z" fill="#f4642e" /></svg>
	</div>
	<div class="ball">79</div>
</div>

<style>
	:global(body) { margin: 0; }

	.app {
		position: relative;
		display: flex;
		flex-direction: column;
		height: 100vh;
		overflow: hidden;
		background: #f0f0f0;
		color: #000;
		font: 12px/16px "Open Sans", "Noto Sans CJK SC", sans-serif;
	}

	.song { font-family: "Liberation Serif", "Noto Sans CJK SC", serif; }

	button, input, select {
		margin: 0;
		padding: 0;
		border: 0;
		background: none;
		color: inherit;
		font: inherit;
		white-space: nowrap;
	}

	svg { display: block; flex: none; }

	.caret {
		flex: none;
		border: 3px solid transparent;
		border-top: 3px solid currentColor;
		border-bottom: 0;
		margin-left: -2px;
	}
	.caret.wide { margin: 0 1px 0 1px; }
	.caret.flip { transform: rotate(180deg); }

	.chev { color: #555; }
	.chev.up { transform: rotate(180deg); }
	.chev.left { transform: rotate(90deg); }
	.chev.right { transform: rotate(-90deg); }

	/* title and menu */
	.title {
		display: flex;
		align-items: center;
		gap: 4px;
		height: 23px;
		padding-left: 2px;
		background: #fff;
	}
	h1 {
		flex: 1;
		min-width: 0;
		overflow: hidden;
		margin: 0;
		font: inherit;
		white-space: nowrap;
	}
	.winbtns { display: flex; }
	.winbtns button {
		display: grid;
		place-items: center;
		width: 47px;
		height: 20px;
	}

	.menubar {
		display: flex;
		gap: 3px;
		height: 30px;
	}
	.menus {
		display: flex;
		flex: none;
		align-items: center;
		gap: 11px;
		width: 927px;
		padding-left: 7px;
	}
	.change { display: flex; align-items: center; gap: 3px; }
	.change .caret { margin-left: 6px; }
	.helper { margin-left: 14px; }

	.strip {
		display: flex;
		align-items: center;
		height: 26px;
		border-radius: 3px;
		background: linear-gradient(#fcfcfc, #efefef);
		white-space: nowrap;
	}
	.tip { justify-content: center; width: 187px; height: 28px; }
	.tip a { color: #2f6b00; text-decoration: none; }
	.account { flex: 1; gap: 4px; height: 28px; padding-left: 3px; }
	.account button { display: flex; align-items: center; }
	.account button .caret { margin: 0 5px 0 8px; }
	.account span { margin-right: 4px; }
	.account .more, .quick .more, .main .more, .view .more {
		align-self: flex-start;
		margin: 0 4px 0 auto;
		font-size: 16px;
		line-height: 14px;
	}

	.toprow { display: flex; align-items: center; gap: 3px; height: 31px; }
	.toprow .strip { height: 28px; }
	.quick { flex: none; width: 150px; }
	.main { flex: none; width: 547px; }
	.view { flex: 1; }

	.tool {
		display: flex;
		flex: none;
		align-items: center;
		gap: 4px;
		height: 24px;
		padding: 0 3px 0 4px;
	}
	.tool:disabled { color: #8a8a8a; }
	.tool.on { box-shadow: inset 0 0 0 1px #1979ca; background: #dce9f5; }
	.sep { flex: none; width: 2px; height: 16px; margin: 0 2px; background: #cdcdcd; }

	.body { display: flex; flex: 1; min-height: 0; }

	/* module navigator */
	.dock {
		display: flex;
		flex: none;
		flex-direction: column;
		width: 165px;
		margin-right: 5px;
	}
	.docktitle {
		display: flex;
		align-items: center;
		height: 16px;
		margin-bottom: 1px;
		background: #0054e3;
		color: #fff;
	}
	.docktitle span { flex: 1; }
	.docktitle button {
		display: grid;
		place-items: center;
		width: 17px;
		height: 14px;
		margin: 0 1px 0 4px;
		border: 1px solid #fff;
	}
	.tab {
		height: 22px;
		margin-left: 1px;
		border: 1px solid #a0a0a0;
		border-top-color: #fff;
		background: #f0f0f0;
	}
	.expanders {
		display: flex;
		align-items: center;
		gap: 4px;
		height: 26px;
		margin-top: 1px;
		padding-left: 6px;
		background: linear-gradient(#fff, #ededed);
	}
	.tree {
		display: flex;
		flex: 1;
		flex-direction: column;
		min-height: 0;
		margin: 0 1px 2px 2px;
		border: 1px solid #828790;
		background: #fff;
	}
	.treetop { display: flex; flex: 1; min-height: 0; }
	.tree ul {
		flex: 1;
		min-width: 0;
		overflow: hidden;
		margin: 0;
		padding: 1px 0 0;
		list-style: none;
	}
	.tree li { display: flex; align-items: center; height: 16px; white-space: nowrap; }
	.node { padding-left: 6px; }
	.node > span:last-child { margin-left: 4px; }
	.twist { width: 17px; }
	.twist.shut { opacity: .6; }
	.rail { width: 19px; height: 16px; margin-left: 12px; border-left: 1px dotted #888; box-sizing: border-box; }
	.rail.none { border-color: transparent; }
	.branch {
		align-self: flex-start;
		width: 10px;
		height: 16px;
		border-left: 1px dotted #888;
		background: linear-gradient(90deg, #888 50%, transparent 50%) 0 8px / 2px 1px repeat-x;
	}
	.branch.end { height: 9px; }
	.pick { display: flex; align-items: center; gap: 5px; height: 16px; }
	.pick.selected { background: #d9d9d9; }

	.vbar { display: flex; flex: none; flex-direction: column; width: 16px; background: #f0f0f0; }
	.vbar button, .hbar button { display: grid; place-items: center; flex: none; width: 16px; height: 17px; }
	.vtrack { display: flex; flex: 1; flex-direction: column; min-height: 0; }
	.thumb { background: #cdcdcd; }
	.treethumb { height: 47%; margin: auto 0 14px; }
	.gridthumb { height: 40%; }
	.hbar { display: flex; align-items: center; height: 17px; background: #f0f0f0; }
	.htrack { display: flex; flex: 1; height: 15px; }
	.treeh .thumb { width: 94%; }
	.treeh { padding-right: 16px; }
	.gridh .thumb { width: 56%; }
	.gridh { padding-right: 16px; }

	/* work area */
	main { display: flex; flex: 1; flex-direction: column; min-width: 0; }
	.row { display: flex; gap: 2px; height: 28px; }
	.grips { padding: 0 2px 0 1px; }
	.grips::before {
		content: "";
		flex: none;
		width: 3px;
		height: 15px;
		margin: 0 1px 0 3px;
		background: repeating-linear-gradient(#b4b4b4 0 2px, transparent 2px 4px);
	}
	.spread .axis { flex: 1; margin-left: 71px; }
	.stub { width: 27px; }

	.combos { display: flex; gap: 5px; margin: 0 1px; }
	.combo {
		display: flex;
		flex: none;
		align-items: center;
		height: 22px;
		background: #fff;
	}
	.combo select {
		flex: 1;
		min-width: 0;
		height: 22px;
		padding-left: 2px;
		appearance: none;
	}
	.combo .caret { margin: 0 3px; }

	.scene { position: relative; flex: 1; min-height: 0; overflow: hidden; }
	.scene > svg { width: 100%; height: 100%; }
	.axes text { font: 12px "Liberation Sans", sans-serif; }

	.float {
		position: absolute;
		top: 3px;
		left: 10px;
		display: flex;
		flex-direction: column;
		width: 166px;
		height: 177px;
		background: #fff;
		box-shadow: 1px 2px 6px rgba(0, 0, 0, .5);
	}
	h2 {
		margin: 6px 8px 9px;
		color: #999;
		font: inherit;
	}
	.checks { flex: 1; margin: 0 1px 1px; padding: 1px 4px; border: 1px solid #828790; }
	.checks label { display: flex; align-items: center; gap: 3px; height: 12px; white-space: nowrap; }
	input[type="checkbox"] {
		flex: none;
		display: grid;
		place-items: center;
		width: 11px;
		height: 11px;
		border: 1px solid #888;
		background: #fff;
		appearance: none;
		box-sizing: border-box;
	}
	input[type="checkbox"]:checked::before {
		content: "";
		width: 5px;
		height: 2px;
		border: solid #333;
		border-width: 0 0 1px 1px;
		transform: rotate(-45deg);
	}

	.snaprow { display: flex; align-items: center; gap: 2px; height: 31px; padding-left: 210px; }
	.snaprow .tool { height: 23px; }
	.offset { gap: 2px; padding-right: 4px; }
	.offset .sep { width: 1px; margin: 0 2px; }
	.offset .dim { min-width: 15px; }
	.offset .dim + .dim { margin-left: 3px; }
	.dim { color: #777; }
	.offset .dim:last-child { min-width: 0; }
	.spin {
		display: flex;
		width: 58px;
		height: 22px;
		border: 1px solid #888;
		box-sizing: border-box;
		color: #888;
	}
	.spin.wide { width: 68px; }
	.spin input { flex: 1; min-width: 0; padding-right: 6px; text-align: right; }
	.spin.wide input { padding-right: 4px; }
	.steps { display: flex; flex-direction: column; justify-content: space-around; width: 14px; }
	.steps button { display: grid; place-items: center; height: 8px; }
	.steps .caret { margin: 0; }
	.turn { display: flex; align-items: center; gap: 8px; margin-right: 3px; color: #444; }

	.panel { display: flex; height: 202px; }
	.handle {
		width: 12px;
		margin: 14px 0 2px 1px;
		background: radial-gradient(circle, #b8b8b8 1px, transparent 1px) 1px 0 / 5px 5px;
	}
	.handle button { display: block; margin-top: -12px; background: #f0f0f0; }
	.handle button svg { margin-top: 2px; }
	.panelbody { display: flex; flex: 1; flex-direction: column; min-width: 0; padding: 3px 2px 1px 0; }
	.total { margin-left: 6px; padding-left: 5px; border-left: 2px solid #cdcdcd; }
	.gridbox {
		display: flex;
		flex: 1;
		flex-direction: column;
		min-height: 0;
		border: 1px solid #a0a0a0;
		border-width: 1px 1px 1px 0;
	}
	.gridview { display: flex; flex: 1; min-height: 0; background: #fff; }
	.gridclip { flex: 1; min-width: 0; overflow: hidden; }

	table { table-layout: fixed; border-collapse: separate; border-spacing: 0; }
	th, td {
		overflow: hidden;
		padding: 0 0 0 2px;
		border: solid #b8bcb8;
		border-width: 0 1px 1px 0;
		background: #ccffd9;
		font-weight: 400;
		text-align: left;
		white-space: nowrap;
		box-sizing: border-box;
	}
	th { padding: 0; background: linear-gradient(#fff, #f0f0f0); text-align: center; }
	thead tr { height: 20px; }
	th.hot { background: linear-gradient(#fad99c, #f3c05e); color: #6a0050; }
	th.current { background: #ffd38c; color: #6a0050; }
	td.name { border-right-color: #000; }
	td.mid { padding: 0; text-align: center; }
	td.active { background: #aeead8; }
	td svg { margin-left: -2px; }
	td svg text { font: 11px "Noto Sans CJK SC", sans-serif; }
	.blank { height: 20px; }
	.blank td { background: #fff; }

	.status { display: flex; gap: 2px; height: 22px; }
	.status span {
		height: 19px;
		margin-top: 1px;
		padding-left: 1px;
		border: 1px solid #d4d4d4;
		background: linear-gradient(#fff, #f0f0f0);
		line-height: 19px;
		box-sizing: border-box;
	}
	.s1 { width: 148px; }
	.s2 { width: 78px; }
	.s3 { width: 98px; }
	.s4 { width: 48px; }
	.s5 { flex: 1; }
	.s6 { width: 70px; }

	/* windows taskbar */
	.taskbar { display: flex; flex: none; height: 40px; background: #04161c; color: #fff; }
	.start { display: grid; place-items: center; width: 48px; }
	.search {
		display: flex;
		align-items: center;
		width: 342px;
		padding: 0 12px 0 8px;
		background: #f2f2f2;
		box-sizing: border-box;
	}
	.search input { flex: 1; min-width: 0; padding-left: 10px; font-size: 14px; }
	.search input::placeholder { color: #333; opacity: 1; }
	.pinned { display: flex; flex: 1; }
	.pinned button { display: grid; place-items: center; width: 51px; padding-top: 1px; box-sizing: border-box; }
	.pinned .run { width: 42px; margin-left: 6px; border-bottom: 3px solid #76b9ed; }
	.pinned .run.cur { width: 48px; margin-left: 3px; background: #3a474b; }
	.scroller { display: flex; flex-direction: column; justify-content: space-between; width: 16px; background: #f0f0f0; }
	.scroller button { display: grid; place-items: center; height: 18px; }
	.tray { display: flex; align-items: center; gap: 8px; padding: 0 25px 0 24px; line-height: 17px; text-align: center; }
	.tray svg { fill: none; stroke: #fff; }
	.cpu { width: 64px; margin: 0 6px 0 14px; }
	.ime { width: 16px; font-size: 14px; }
	.clock { width: 70px; margin: 0 6px 0 4px; line-height: 19px; }

	.imebar {
		position: absolute;
		top: 8px;
		left: 683px;
		display: flex;
		align-items: center;
		gap: 8px;
		height: 22px;
		padding-right: 3px;
		border: 1px solid #9dbde0;
		background: #fbfcfe;
		color: #1e78c8;
		font-size: 15px;
		font-weight: 700;
	}
	.sogou { margin: 0 -2px 0 -3px; }
	.ball {
		position: absolute;
		top: -25px;
		left: 719px;
		display: flex;
		align-items: flex-end;
		justify-content: center;
		width: 40px;
		height: 40px;
		border: 2px solid #8a9a90;
		border-radius: 50%;
		background: linear-gradient(#6fd06f, #2bb24a);
		color: #fff;
		font-weight: 700;
		line-height: 20px;
	}
</style>
